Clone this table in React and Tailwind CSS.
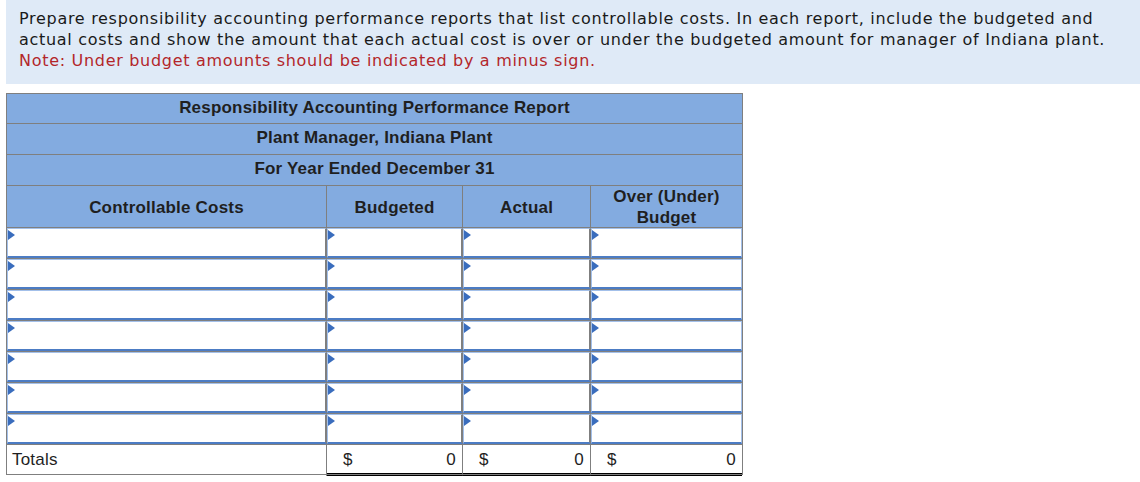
const rows = [0, 1, 2, 3, 4, 5, 6]

const App = () => {
  return (
    <div className="w-[1140px] h-[482px] bg-white">
      <div className="ml-[6px] h-[84px] bg-[#dfeaf7] pl-[13px] pt-[8px] text-[16px] leading-[21px] tracking-[0.7px] text-[#1a1a1a] font-['DejaVu_Sans',sans-serif]">
        Prepare responsibility accounting performance reports that list controllable costs. In each report, include the budgeted and<br />
        actual costs and show the amount that each actual cost is over or under the budgeted amount for manager of Indiana plant.<br />
        <span className="text-[#b3262a]">Note: Under budget amounts should be indicated by a minus sign.</span>
      </div>

      <div className="ml-[6px] mt-[9px] w-[737px] border border-[#7f7f7f] font-['Liberation_Sans',Arial,sans-serif] text-[17px] tracking-[0.2px] text-[#1f1f1f]">
        <div className="h-[30px] bg-[#83abe0] border-b border-[#7f7f7f] flex items-center justify-center font-bold pb-[2px]">Responsibility Accounting Performance Report</div>
        <div className="h-[31px] bg-[#83abe0] border-b border-[#7f7f7f] flex items-center justify-center font-bold pb-[2px]">Plant Manager, Indiana Plant</div>
        <div className="h-[31px] bg-[#83abe0] border-b border-[#7f7f7f] flex items-center justify-center font-bold pb-[3px]">For Year Ended December 31</div>
        <div className="grid grid-cols-[320px_136px_128px_151px] h-[42px] bg-[#83abe0] font-bold text-center leading-[21px] border-b border-[#7f7f7f]">
          <div className="flex items-center justify-center border-r border-[#7f7f7f] pb-[2px]">Controllable Costs</div>
          <div className="flex items-center justify-center border-r border-[#7f7f7f] pb-[2px]">Budgeted</div>
          <div className="flex items-center justify-center border-r border-[#7f7f7f] pb-[2px]">Actual</div>
          <div className="flex items-center justify-center pb-[2px]">Over (Under)<br />Budget</div>
        </div>
        {rows.map((r) => (
          <div key={r} className="grid grid-cols-[320px_136px_128px_151px] h-[31px] border-b border-[#7f7f7f]">
            {[0, 1, 2, 3].map((c) => (
              <div key={c} className={`relative h-[30px] bg-white border border-[#a3c0ea] border-b-2 border-b-[#4c7cc4] ${c < 3 ? 'border-r-[#7f7f7f] border-r-2' : ''}`}>
                <span className="absolute left-0 top-[1px] w-0 h-0 border-y-[5px] border-y-transparent border-l-[7px] border-l-[#3a6dbd]" />
              </div>
            ))}
          </div>
        ))}
        <div className="grid grid-cols-[320px_136px_128px_151px] h-[29px]">
          <div className="pl-[5px] pt-[2px] border-r border-[#7f7f7f]">Totals</div>
          {[0, 1, 2].map((i) => (
            <div key={i} className={`flex justify-between pl-[16px] pr-[6px] pt-[2px] border-b-[3px] border-double border-b-black ${i < 2 ? 'border-r border-r-[#7f7f7f]' : ''}`}>
              <span>$</span>
              <span>0</span>
            </div>
          ))}
        </div>
      </div>
    </div>
  )
}

export default App
